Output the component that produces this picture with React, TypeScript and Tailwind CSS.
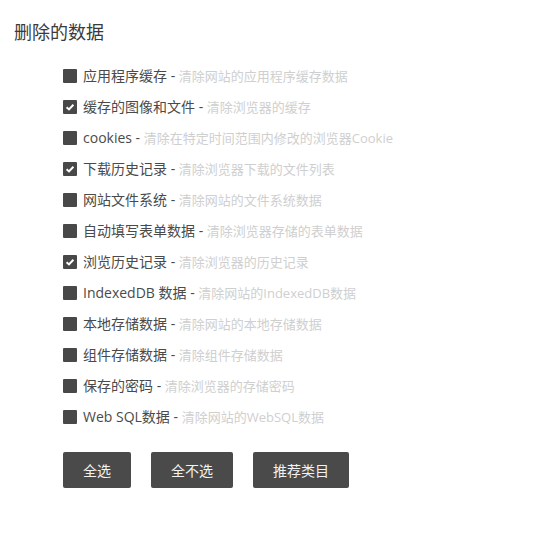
import React, { useState } from "react";

const items = [
  { name: "应用程序缓存", desc: "清除网站的应用程序缓存数据", on: false },
  { name: "缓存的图像和文件", desc: "清除浏览器的缓存", on: true },
  { name: "cookies", desc: "清除在特定时间范围内修改的浏览器Cookie", on: false },
  { name: "下载历史记录", desc: "清除浏览器下载的文件列表", on: true },
  { name: "网站文件系统", desc: "清除网站的文件系统数据", on: false },
  { name: "自动填写表单数据", desc: "清除浏览器存储的表单数据", on: false },
  { name: "浏览历史记录", desc: "清除浏览器的历史记录", on: true },
  { name: "IndexedDB 数据", desc: "清除网站的IndexedDB数据", on: false },
  { name: "本地存储数据", desc: "清除网站的本地存储数据", on: false },
  { name: "组件存储数据", desc: "清除组件存储数据", on: false },
  { name: "保存的密码", desc: "清除浏览器的存储密码", on: false },
  { name: "Web SQL数据", desc: "清除网站的WebSQL数据", on: false },
];

const recommended = [1, 3, 6];

export default function App() {
  const [checked, setChecked] = useState(items.map((i) => i.on));

  const toggle = (idx: number) =>
    setChecked((prev) => prev.map((v, i) => (i === idx ? !v : v)));

  return (
    <div
      className="min-h-screen bg-white pt-5 pl-[14px]"
      style={{ fontFamily: '"Open Sans", "Noto Sans CJK SC", sans-serif' }}
    >
      <h1 className="h-6 text-[18px] leading-6 font-normal text-[#3a3a3a]">删除的数据</h1>

      <div className="mt-4 ml-[49px]">
        {items.map((item, idx) => (
          <label key={item.name} className="flex h-[31px] cursor-pointer items-center">
            <span
              onClick={() => toggle(idx)}
              className="flex h-[14px] w-[14px] shrink-0 items-center justify-center rounded-[1px] bg-[#484848]"
            >
              {checked[idx] && (
                <svg width="10" height="10" viewBox="0 0 10 10">
                  <path d="M1.6 5.2 L4 7.4 L8.4 2.8" fill="none" stroke="#fff" strokeWidth="2" />
                </svg>
              )}
            </span>
            <span className="ml-[6px] text-[14px] leading-5 text-[#4a4a4a]">{item.name}</span>
            <span className="text-[14px] leading-5 text-[#4a4a4a]">&nbsp;-&nbsp;</span>
            <span className="text-[13px] leading-5 text-[#cfcfcf]">{item.desc}</span>
          </label>
        ))}

        <div className="mt-5 flex gap-5">
          <button
            onClick={() => setChecked(items.map(() => true))}
            className="h-9 rounded-[2px] bg-[#4a4a4a] px-5 text-[14px] text-[#f2f2f2]"
          >
            全选
          </button>
          <button
            onClick={() => setChecked(items.map(() => false))}
            className="h-9 rounded-[2px] bg-[#4a4a4a] px-5 text-[14px] text-[#f2f2f2]"
          >
            全不选
          </button>
          <button
            onClick={() => setChecked(items.map((_, i) => recommended.includes(i)))}
            className="h-9 rounded-[2px] bg-[#4a4a4a] px-5 text-[14px] text-[#f2f2f2]"
          >
            推荐类目
          </button>
        </div>
      </div>
    </div>
  );
}
